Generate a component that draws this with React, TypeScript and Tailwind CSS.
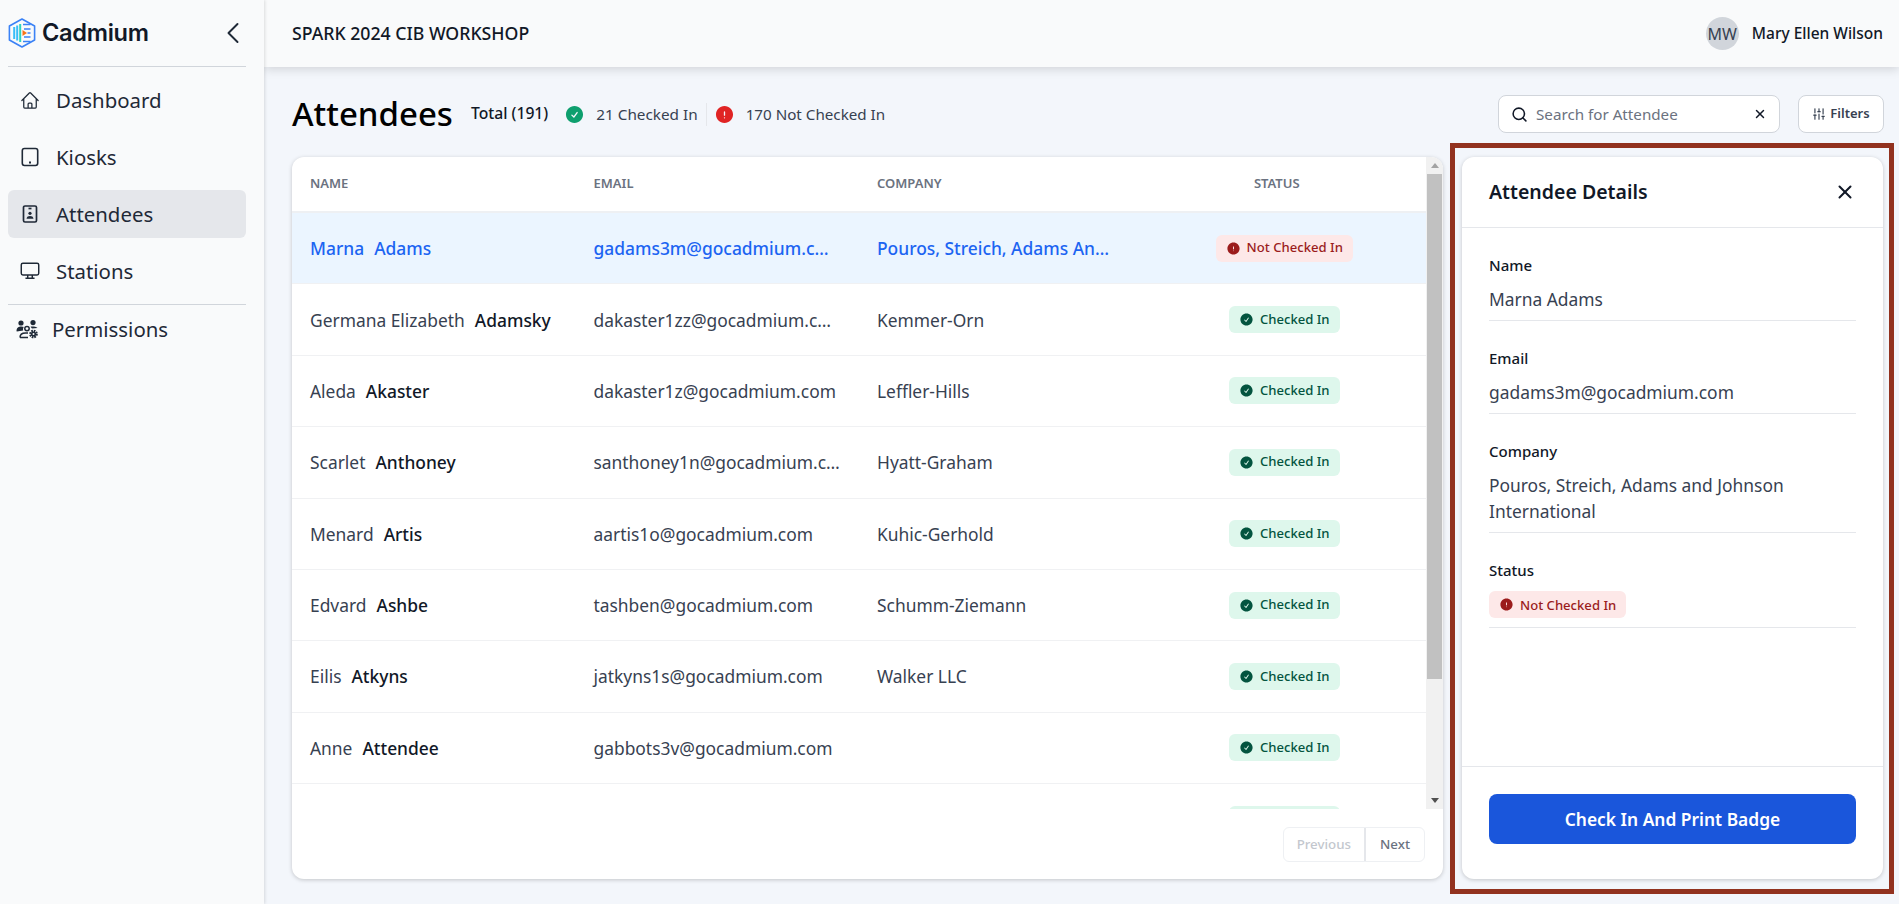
import React from "react";
import { ChevronLeft, Search, X, SlidersVertical } from "lucide-react";
import { HiOutlineHome, HiCheckCircle, HiExclamationCircle } from "react-icons/hi2";

const FONT = "font-['Noto_Sans','Open_Sans',sans-serif]";

function Logo() {
  return (
    <svg width="28" height="30" viewBox="0 0 28 30" fill="none" className="shrink-0">
      <path d="M14 1 L26.6 8 V22 L14 29 L1.4 22 V8 Z" stroke="#3b82f6" strokeWidth="1.6" strokeLinejoin="round" />
      <rect x="5.2" y="9" width="2" height="12" fill="#38bdf8" />
      <rect x="8.2" y="7.5" width="2" height="15" fill="#38bdf8" />
      <rect x="11.2" y="6" width="2" height="18" fill="#2dd4bf" />
      <path d="M15 6.5 H22.5 M16 11 H22.5 M19.5 15 H22.5 M16 19 H22.5 M15 23.5 H22.5" stroke="#3b82f6" strokeWidth="1.6" />
      <path d="M14.5 12 L19 15 L14.5 18 Z" fill="#f97316" />
    </svg>
  );
}

function TabletIcon() {
  return (
    <svg width="20" height="20" viewBox="0 0 20 20" fill="none" stroke="#1f2937" strokeWidth="1.6">
      <rect x="2.3" y="1.5" width="15.4" height="17" rx="2.2" />
      <path d="M9 15.5 H11" strokeWidth="1.8" />
    </svg>
  );
}

function MonitorIcon() {
  return (
    <svg width="22" height="20" viewBox="0 0 22 20" fill="none" stroke="#1f2937" strokeWidth="1.6">
      <rect x="1.4" y="1.4" width="19.2" height="13" rx="1.8" />
      <path d="M8.5 14.5 V17.6 M13.5 14.5 V17.6 M6 18 H16" />
    </svg>
  );
}

function BadgeIcon() {
  return (
    <svg width="20" height="20" viewBox="0 0 20 20" fill="none" stroke="#1f2937" strokeWidth="1.7">
      <rect x="3.5" y="2" width="13" height="16" rx="1.5" />
      <path d="M8.5 4.5 H11.5" />
      <circle cx="10" cy="9.3" r="1.6" fill="#1f2937" stroke="none" />
      <path d="M6.5 14.7 C6.8 12.6 8.2 12 10 12 C11.8 12 13.2 12.6 13.5 14.7 Z" fill="#1f2937" stroke="none" />
    </svg>
  );
}

function PermissionsIcon() {
  return (
    <svg width="23" height="20" viewBox="0 0 23 20" fill="#1f2937">
      <circle cx="5" cy="4" r="2.6" />
      <circle cx="17" cy="3.6" r="2.6" />
      <path d="M0.5 12 C0.7 8.6 2.6 7.6 5.4 7.6 C6.4 7.6 7.2 7.8 7.8 8 C7 9 6.9 10.5 7.2 11.4 L0.8 12.4 Z" />
      <path d="M14.5 7.7 C15.5 7.3 19.5 7 21.5 9 L16 9.5 Z" />
      <circle cx="11" cy="9.6" r="2.2" fill="none" stroke="#1f2937" strokeWidth="1.5" />
      <path d="M4 18.5 C4 15.4 6 14 9.5 14 H12 M4 18.5 H12" fill="none" stroke="#1f2937" strokeWidth="1.5" />
      <circle cx="17.5" cy="15" r="3.2" fill="none" stroke="#1f2937" strokeWidth="2.2" strokeDasharray="1.6 0.9" />
      <circle cx="17.5" cy="15" r="2.6" />
      <circle cx="17.5" cy="15" r="1" fill="#f9fafb" />
    </svg>
  );
}

function NavItem({ icon, label, active }: { icon: React.ReactNode; label: string; active?: boolean }) {
  return (
    <div className={`flex h-12 items-center rounded-md pl-3 ${active ? "bg-[#e5e7eb]" : ""}`}>
      <span className="flex w-5 justify-center">{icon}</span>
      <span className="ml-4 text-[20.4px] leading-[26px] text-[#1f2937]">{label}</span>
    </div>
  );
}

function Sidebar() {
  return (
    <aside className="z-20 flex h-full w-[264px] shrink-0 flex-col bg-[#f9fafb] pr-[18px] pl-2 shadow-[1px_0_3px_rgba(0,0,0,0.12)]">
      <div className="flex h-[67px] shrink-0 items-center justify-between border-b border-[#d1d5db]">
        <div className="flex items-center gap-[6px]">
          <Logo />
          <span className="font-['Inter',sans-serif] text-[23.6px] leading-none font-semibold tracking-[-0.3px] text-[#111827]">Cadmium</span>
        </div>
        <ChevronLeft size={36} strokeWidth={1.3} className="-mr-[5px] text-[#1f2937]" />
      </div>
      <nav className="flex flex-col gap-[9px] border-b border-[#d1d5db] py-[9px]">
        <NavItem icon={<HiOutlineHome size={23} color="#1f2937" />} label="Dashboard" />
        <NavItem icon={<TabletIcon />} label="Kiosks" />
        <NavItem active icon={<BadgeIcon />} label="Attendees" />
        <NavItem icon={<MonitorIcon />} label="Stations" />
      </nav>
      <div className="flex h-12 items-center pl-2">
        <PermissionsIcon />
        <span className="ml-[13px] text-[20.4px] text-[#1f2937]">Permissions</span>
      </div>
    </aside>
  );
}

function StatusBadge({ checked }: { checked: boolean }) {
  return (
    <span
      className={`inline-flex h-[27px] items-center gap-[6px] rounded-md px-[10px] text-[13.1px] font-medium whitespace-nowrap ${
        checked ? "bg-[#def7ec] text-[#03543f]" : "bg-[#fde8e8] text-[#9b1c1c]"
      }`}
    >
      {checked ? <HiCheckCircle size={15} /> : <HiExclamationCircle size={15} />}
      {checked ? "Checked In" : "Not Checked In"}
    </span>
  );
}

const rows = [
  { first: "Marna", last: "Adams", email: "gadams3m@gocadmium.com", company: "Pouros, Streich, Adams And Johnson International", checked: false, active: true },
  { first: "Germana Elizabeth", last: "Adamsky", email: "dakaster1zz@gocadmium.com", company: "Kemmer-Orn", checked: true },
  { first: "Aleda", last: "Akaster", email: "dakaster1z@gocadmium.com", company: "Leffler-Hills", checked: true },
  { first: "Scarlet", last: "Anthoney", email: "santhoney1n@gocadmium.com", company: "Hyatt-Graham", checked: true },
  { first: "Menard", last: "Artis", email: "aartis1o@gocadmium.com", company: "Kuhic-Gerhold", checked: true },
  { first: "Edvard", last: "Ashbe", email: "tashben@gocadmium.com", company: "Schumm-Ziemann", checked: true },
  { first: "Eilis", last: "Atkyns", email: "jatkyns1s@gocadmium.com", company: "Walker LLC", checked: true },
  { first: "Anne", last: "Attendee", email: "gabbots3v@gocadmium.com", company: "", checked: true },
  { first: "", last: "", email: "", company: "", checked: true },
];

function AttendeeTable() {
  return (
    <section className="flex min-w-0 flex-1 flex-col overflow-hidden rounded-xl bg-white shadow-[0_1px_4px_rgba(0,0,0,0.2)]">
      <div className="flex h-[652px] min-h-0">
        <div className="min-w-0 flex-1 overflow-hidden">
          <div className="grid h-[56px] grid-cols-4 items-center border-b-2 border-[#eef0f3] text-[13px] font-semibold text-[#6b7280]">
            <div className="px-[18px]">NAME</div>
            <div className="px-[18px]">EMAIL</div>
            <div className="px-[18px]">COMPANY</div>
            <div className="pr-[15px] text-center">STATUS</div>
          </div>
          {rows.map((r, i) => (
            <div
              key={i}
              className={`grid h-[71.4px] grid-cols-4 items-center border-b border-[#f0f1f3] text-[17.4px] ${
                r.active ? "bg-[#ebf5ff] font-medium text-[#1c64f2]" : "text-[#374151]"
              }`}
            >
              <div className="truncate px-[18px]">
                {r.first}
                <span className={`ml-[10px] font-medium ${r.active ? "" : "text-[#111827]"}`}>{r.last}</span>
              </div>
              <div className={`truncate pl-[18px] ${r.active ? "pr-7" : "pr-[18px]"}`}>{r.email}</div>
              <div className={`truncate pl-[18px] ${r.active ? "pr-7" : "pr-[18px]"}`}>{r.company}</div>
              <div className="text-center">
                <StatusBadge checked={r.checked} />
              </div>
            </div>
          ))}
        </div>
        <div className="flex w-[17px] shrink-0 flex-col items-center bg-[#f1f1f1]">
          <div className="flex h-[17px] w-full items-center justify-center">
            <span className="h-0 w-0 border-x-[4px] border-b-[5px] border-x-transparent border-b-[#a3a3a3]" />
          </div>
          <div className="h-[505px] w-[15px] bg-[#c1c1c1]" />
          <div className="flex-1" />
          <div className="flex h-[17px] w-full items-center justify-center">
            <span className="h-0 w-0 border-x-[4px] border-t-[5px] border-x-transparent border-t-[#505050]" />
          </div>
        </div>
      </div>
      <div className="flex flex-1 items-start justify-end pt-[18px] pr-[18px]">
        <div className="flex h-[35px] overflow-hidden rounded-md border border-[#eef0f3] text-[13.3px] font-medium">
          <span className="flex items-center px-[13px] text-[#c3c7ce]">Previous</span>
          <span className="flex items-center border-l-2 border-[#e5e7eb] px-[14px] text-[#6b7280]">Next</span>
        </div>
      </div>
    </section>
  );
}

function Field({ label, children, pb = "pb-2" }: { label: string; children: React.ReactNode; pb?: string }) {
  return (
    <div className={`border-b border-[#e5e7eb] pt-[27px] ${pb}`}>
      <div className="text-[15px] leading-5 font-medium text-[#111827]">{label}</div>
      <div className="mt-[11px] text-[17.4px] leading-[26px] text-[#374151]">{children}</div>
    </div>
  );
}

function DetailsPanel() {
  return (
    <section className="relative flex w-[421px] shrink-0 flex-col rounded-xl bg-white shadow-[0_1px_4px_rgba(0,0,0,0.2)]">
      <div className="pointer-events-none absolute -top-[14px] -right-[11px] -bottom-[15px] -left-[12px] border-[5px] border-[#92321f]" />
      <div className="flex h-[71px] shrink-0 items-center justify-between border-b border-[#e5e7eb] px-[27px]">
        <h2 className="text-[19.5px] font-semibold text-[#111827]">Attendee Details</h2>
        <X size={22} strokeWidth={2.2} className="text-[#111827]" />
      </div>
      <div className="flex-1 px-[27px]">
        <Field label="Name">Marna Adams</Field>
        <Field label="Email">gadams3m@gocadmium.com</Field>
        <Field label="Company">Pouros, Streich, Adams and Johnson International</Field>
        <Field label="Status" pb="pb-[9px]">
          <div className="flex">
            <StatusBadge checked={false} />
          </div>
        </Field>
      </div>
      <div className="flex h-[113px] shrink-0 items-start border-t border-[#e5e7eb] px-[27px] pt-[27px]">
        <button className="h-[50px] w-full rounded-lg bg-[#1a56db] text-[17.4px] font-semibold text-white">Check In And Print Badge</button>
      </div>
    </section>
  );
}

export default function App() {
  return (
    <div className={`${FONT} flex h-screen w-full overflow-hidden bg-[#f3f6fb]`}>
      <Sidebar />
      <div className="flex min-w-0 flex-1 flex-col">
        <header className="z-10 flex h-[67px] shrink-0 items-center justify-between bg-[#f9fafb] pr-4 pl-7 shadow-[0_2px_10px_rgba(0,0,0,0.15)]">
          <div className="text-[17.7px] font-medium text-[#111827]">SPARK 2024 CIB WORKSHOP</div>
          <div className="flex items-center gap-[13px]">
            <div className="flex h-[33px] w-[33px] items-center justify-center rounded-full bg-[#d1d5db] text-[16px] text-[#374151]">MW</div>
            <span className="text-[15.5px] font-medium text-[#111827]">Mary Ellen Wilson</span>
          </div>
        </header>
        <main className="flex min-h-0 flex-1 flex-col pr-4 pb-[25px] pl-7">
          <div className="flex h-[90px] shrink-0 items-center pt-[4px]">
            <h1 className="text-[33px] font-medium text-black">Attendees</h1>
            <span className="ml-[18px] text-[15.7px] font-medium text-[#111827]">Total (191)</span>
            <HiCheckCircle size={21} className="ml-4 text-[#0e9f6e]" />
            <span className="ml-[11px] text-[15.3px] text-[#374151]">21 Checked In</span>
            <span className="ml-2 h-[23px] w-px bg-[#e5e7eb]" />
            <HiExclamationCircle size={21} className="ml-[7px] text-[#e02424]" />
            <span className="ml-[11px] text-[15.2px] text-[#374151]">170 Not Checked In</span>
            <div className="-mr-px ml-auto flex items-center gap-[18px]">
              <div className="flex h-[38px] w-[282px] items-center rounded-lg border border-[#d1d5db] bg-white px-3">
                <Search size={17} strokeWidth={2.2} className="text-[#111827]" />
                <span className="ml-[8px] flex-1 text-[15.2px] text-[#6b7280]">Search for Attendee</span>
                <X size={14} strokeWidth={2.5} className="text-[#111827]" />
              </div>
              <div className="flex h-[38px] w-[86px] items-center justify-center gap-1 rounded-lg border border-[#d1d5db] bg-white text-[13px] font-semibold text-[#374151]">
                <SlidersVertical size={14} strokeWidth={2} />
                Filters
              </div>
            </div>
          </div>
          <div className="flex min-h-0 flex-1 gap-[19px]">
            <AttendeeTable />
            <DetailsPanel />
          </div>
        </main>
      </div>
    </div>
  );
}
